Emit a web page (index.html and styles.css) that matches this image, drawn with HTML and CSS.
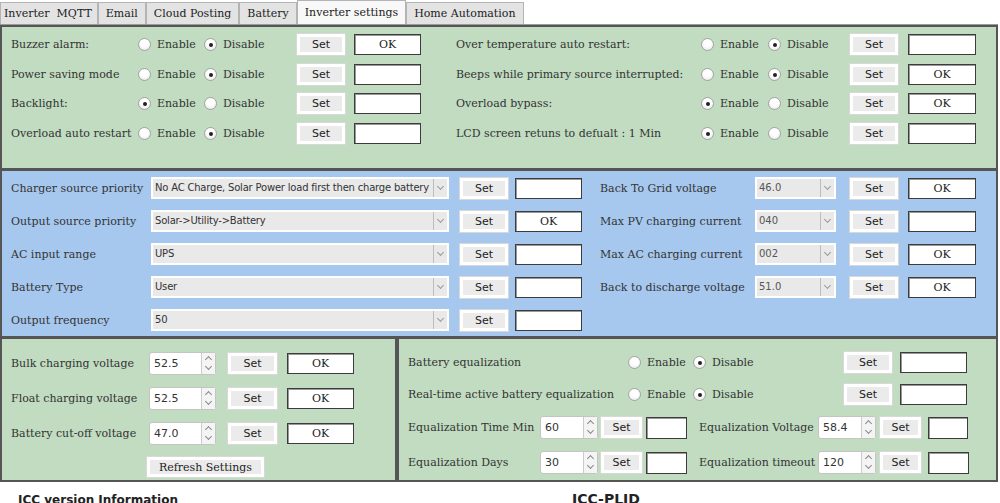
FILE: index.html
```html
<!DOCTYPE html>
<html lang="en">
<head>
    <meta charset="UTF-8">
    <title>Inverter settings</title>
    <link rel="stylesheet" href="styles.css">
</head>
<body>

    <div class="tabs">
        <div class="tab first">Inverter&nbsp; MQTT</div>
        <div class="tab">Email</div>
        <div class="tab">Cloud Posting</div>
        <div class="tab">Battery</div>
        <div class="tab active">Inverter settings</div>
        <div class="tab">Home Automation</div>
    </div>

    <!-- switches -->
    <section class="panel green panel-top">
        <div class="grid top-left">
            <span class="lbl">Buzzer alarm:</span>
            <label class="opt"><span class="radio"></span>Enable</label>
            <label class="opt"><span class="radio on"></span>Disable</label>
            <button class="set">Set</button>
            <div class="status">OK</div>

            <span class="lbl">Power saving mode</span>
            <label class="opt"><span class="radio"></span>Enable</label>
            <label class="opt"><span class="radio on"></span>Disable</label>
            <button class="set">Set</button>
            <div class="status"></div>

            <span class="lbl">Backlight:</span>
            <label class="opt"><span class="radio on"></span>Enable</label>
            <label class="opt"><span class="radio"></span>Disable</label>
            <button class="set">Set</button>
            <div class="status"></div>

            <span class="lbl">Overload auto restart</span>
            <label class="opt"><span class="radio"></span>Enable</label>
            <label class="opt"><span class="radio on"></span>Disable</label>
            <button class="set">Set</button>
            <div class="status"></div>
        </div>
        <div class="grid top-right">
            <span class="lbl">Over temperature auto restart:</span>
            <label class="opt"><span class="radio"></span>Enable</label>
            <label class="opt"><span class="radio on"></span>Disable</label>
            <button class="set">Set</button>
            <div class="status"></div>

            <span class="lbl">Beeps while primary source interrupted:</span>
            <label class="opt"><span class="radio"></span>Enable</label>
            <label class="opt"><span class="radio on"></span>Disable</label>
            <button class="set">Set</button>
            <div class="status">OK</div>

            <span class="lbl">Overload bypass:</span>
            <label class="opt"><span class="radio on"></span>Enable</label>
            <label class="opt"><span class="radio"></span>Disable</label>
            <button class="set">Set</button>
            <div class="status">OK</div>

            <span class="lbl">LCD screen retuns to defualt : 1 Min</span>
            <label class="opt"><span class="radio on"></span>Enable</label>
            <label class="opt"><span class="radio"></span>Disable</label>
            <button class="set">Set</button>
            <div class="status"></div>
        </div>
    </section>

    <!-- priorities -->
    <section class="panel blue panel-mid">
        <div class="grid mid-left">
            <span class="lbl">Charger source priority</span>
            <div class="combo wide"><span class="combo-text">No AC Charge, Solar Power load first then charge battery</span><span class="combo-arrow"></span></div>
            <button class="set">Set</button>
            <div class="status"></div>

            <span class="lbl">Output source priority</span>
            <div class="combo wide"><span class="combo-text">Solar-&gt;Utility-&gt;Battery</span><span class="combo-arrow"></span></div>
            <button class="set">Set</button>
            <div class="status">OK</div>

            <span class="lbl">AC input range</span>
            <div class="combo wide"><span class="combo-text">UPS</span><span class="combo-arrow"></span></div>
            <button class="set">Set</button>
            <div class="status"></div>

            <span class="lbl">Battery Type</span>
            <div class="combo wide"><span class="combo-text">User</span><span class="combo-arrow"></span></div>
            <button class="set">Set</button>
            <div class="status"></div>

            <span class="lbl">Output frequency</span>
            <div class="combo wide"><span class="combo-text">50</span><span class="combo-arrow"></span></div>
            <button class="set">Set</button>
            <div class="status"></div>
        </div>
        <div class="grid mid-right">
            <span class="lbl">Back To Grid voltage</span>
            <div class="combo small"><span class="combo-text">46.0</span><span class="combo-arrow"></span></div>
            <button class="set">Set</button>
            <div class="status">OK</div>

            <span class="lbl">Max PV charging current</span>
            <div class="combo small"><span class="combo-text">040</span><span class="combo-arrow"></span></div>
            <button class="set">Set</button>
            <div class="status"></div>

            <span class="lbl">Max AC charging current</span>
            <div class="combo small"><span class="combo-text">002</span><span class="combo-arrow"></span></div>
            <button class="set">Set</button>
            <div class="status">OK</div>

            <span class="lbl">Back to discharge voltage</span>
            <div class="combo small"><span class="combo-text">51.0</span><span class="combo-arrow"></span></div>
            <button class="set">Set</button>
            <div class="status">OK</div>
        </div>
    </section>

    <div class="bottom">
        <!-- charging voltages -->
        <section class="panel green panel-volt">
            <div class="grid volt-grid">
                <span class="lbl">Bulk charging voltage</span>
                <div class="spin"><span class="spin-text">52.5</span><span class="spin-btns"></span></div>
                <button class="set">Set</button>
                <div class="status">OK</div>

                <span class="lbl">Float charging voltage</span>
                <div class="spin"><span class="spin-text">52.5</span><span class="spin-btns"></span></div>
                <button class="set">Set</button>
                <div class="status">OK</div>

                <span class="lbl">Battery cut-off voltage</span>
                <div class="spin"><span class="spin-text">47.0</span><span class="spin-btns"></span></div>
                <button class="set">Set</button>
                <div class="status">OK</div>
            </div>
            <button class="set refresh">Refresh Settings</button>
        </section>

        <!-- equalization -->
        <section class="panel green panel-eq">
            <div class="grid eq-top">
                <span class="lbl">Battery equalization</span>
                <label class="opt"><span class="radio"></span>Enable</label>
                <label class="opt"><span class="radio on"></span>Disable</label>
                <button class="set">Set</button>
                <div class="status"></div>

                <span class="lbl">Real-time active battery equalization</span>
                <label class="opt"><span class="radio"></span>Enable</label>
                <label class="opt"><span class="radio on"></span>Disable</label>
                <button class="set">Set</button>
                <div class="status"></div>
            </div>
            <div class="grid eq-bottom">
                <span class="lbl">Equalization Time Min</span>
                <div class="spin"><span class="spin-text">60</span><span class="spin-btns"></span></div>
                <button class="set">Set</button>
                <div class="status"></div>
                <span class="lbl">Equalization Voltage</span>
                <div class="spin"><span class="spin-text">58.4</span><span class="spin-btns"></span></div>
                <button class="set">Set</button>
                <div class="status"></div>

                <span class="lbl">Equalization Days</span>
                <div class="spin"><span class="spin-text">30</span><span class="spin-btns"></span></div>
                <button class="set">Set</button>
                <div class="status"></div>
                <span class="lbl">Equalization timeout</span>
                <div class="spin"><span class="spin-text">120</span><span class="spin-btns"></span></div>
                <button class="set">Set</button>
                <div class="status"></div>
            </div>
        </section>
    </div>

    <footer class="info">
        <span class="info-title">ICC version Information</span>
        <span class="info-plid">ICC-PLID</span>
    </footer>

</body>
</html>
```

FILE: styles.css
```css
body {
    margin: 0;
    font-family: "DejaVu Serif", serif;
    font-size: 11px;
    color: #333;
    background-color: #fff;
    width: 998px;
}
.tabs {
    display: flex;
    height: 25px;
    border-bottom: 1px solid #9a9a9a;
    box-sizing: border-box;
}
.tab {
    padding: 0 7px;
    margin-top: 2px;
    line-height: 22px;
    border: 1px solid #b4b4b4;
    border-bottom: none;
    background-color: #e3e3e3;
    color: #222;
    white-space: nowrap;
}
.tab.first {
    padding: 0 5px 0 3px;
}
.tab.active {
    margin-top: 0;
    line-height: 24px;
    background-color: #f8f8f8;
    padding: 0 7px;
}
.panel {
    border: 2px solid #555;
    box-sizing: border-box;
}
.green {
    background-color: #c1dcc1;
}
.blue {
    background-color: #a7c8ee;
}
.grid {
    display: grid;
    align-items: center;
    align-content: start;
}
.lbl {
    white-space: nowrap;
}
/* --- radios --- */
.opt {
    display: flex;
    align-items: center;
    gap: 6px;
    white-space: nowrap;
}
.radio {
    width: 11px;
    height: 11px;
    border-radius: 50%;
    border: 1px solid #a3a3a3;
    background: radial-gradient(circle at 50% 35%, #fff 40%, #e2e2e2 100%);
    position: relative;
    flex: none;
}
.radio.on::after {
    content: "";
    position: absolute;
    left: 4px;
    top: 4px;
    width: 4px;
    height: 4px;
    border-radius: 50%;
    background-color: #222;
}
/* --- buttons and status boxes --- */
.set {
    height: 21px;
    width: 48px;
    padding: 0;
    border: 3px solid #fff;
    background-color: #ebebeb;
    box-shadow: 0 0 0 1px #d8d8d8;
    font-family: "DejaVu Sans", sans-serif;
    font-size: 11px;
    color: #222;
    box-sizing: border-box;
}
.status {
    height: 21px;
    width: 67px;
    border: 1px solid #3c3c3c;
    box-shadow: inset 1px 1px 0 #999;
    background-color: #fff;
    box-sizing: border-box;
    text-align: center;
    line-height: 19px;
    color: #222;
}
/* --- top panel --- */
.panel-top {
    display: flex;
    height: 145px;
}
.top-left {
    margin-left: 9px;
    padding-top: 7px;
    grid-template-columns: 127px 66px 93px 57px 67px;
    row-gap: 8.5px;
}
.top-right {
    margin-left: 35px;
    padding-top: 7px;
    grid-template-columns: 245px 67px 82px 58px 68px;
    row-gap: 8.5px;
}
.top-right .status {
    width: 68px;
}
/* --- middle panel --- */
.panel-mid {
    display: flex;
    height: 169px;
    margin-top: -1px;
}
.mid-left {
    margin-left: 9px;
    padding-top: 6px;
    grid-template-columns: 140px 309px 55px 67px;
    row-gap: 11px;
}
.mid-right {
    margin-left: 18px;
    padding-top: 6px;
    grid-template-columns: 155px 95px 58px 68px;
    row-gap: 11px;
}
.mid-right .status {
    width: 68px;
}
.combo {
    display: flex;
    height: 22px;
    border: 2px solid #fff;
    background-color: #e9e9e9;
    box-sizing: border-box;
    font-family: "DejaVu Sans", sans-serif;
    font-size: 10px;
    letter-spacing: -0.2px;
    color: #333;
}
.combo.wide {
    width: 298px;
}
.combo.small {
    width: 81px;
}
.combo.small .combo-text {
    color: #555;
    letter-spacing: 0;
}
.combo-text {
    flex: 1;
    padding-left: 2px;
    line-height: 18px;
    overflow: hidden;
    white-space: nowrap;
}
.combo-arrow {
    width: 13px;
    border-left: 1px solid #bdbdbd;
    position: relative;
}
.combo-arrow::after {
    content: "";
    position: absolute;
    left: 4px;
    top: 5px;
    width: 4px;
    height: 4px;
    border-right: 1px solid #9a9a9a;
    border-bottom: 1px solid #9a9a9a;
    transform: rotate(45deg);
}
/* --- bottom panels --- */
.bottom {
    display: flex;
    height: 145px;
    margin-top: -1px;
}
.panel-volt {
    width: 397px;
}
.panel-eq {
    width: 601px;
}
.volt-grid {
    margin-left: 9px;
    padding-top: 13px;
    grid-template-columns: 138px 79px 59px 67px;
    row-gap: 12px;
}
.volt-grid .set {
    width: 49px;
}
.spin {
    display: flex;
    height: 23px;
    width: 67px;
    border: 1px solid #c4c4c4;
    border-radius: 3px;
    background-color: #fff;
    box-sizing: border-box;
    font-family: "DejaVu Sans", sans-serif;
    font-size: 11px;
    color: #333;
}
.spin-text {
    flex: 1;
    padding-left: 4px;
    line-height: 21px;
}
.spin-btns {
    width: 13px;
    border-left: 1px solid #ccc;
    background-color: #f4f4f4;
    position: relative;
}
.spin-btns::before,
.spin-btns::after {
    content: "";
    position: absolute;
    left: 4px;
    width: 4px;
    height: 4px;
    border-left: 1px solid #888;
    border-top: 1px solid #888;
}
.spin-btns::before {
    top: 4px;
    transform: rotate(45deg);
}
.spin-btns::after {
    top: 11px;
    transform: rotate(225deg);
}
.refresh {
    display: block;
    width: 117px;
    height: 20px;
    margin: 12px 0 0 145px;
    font-family: "DejaVu Serif", serif;
}
.eq-top {
    margin-left: 9px;
    padding-top: 13px;
    grid-template-columns: 220px 65px 151px 56px 68px;
    row-gap: 11px;
}
.eq-bottom {
    margin-left: 9px;
    margin-top: 11px;
    grid-template-columns: 132px 61px 45px 53px 119px 62px 48px 40px;
    row-gap: 12px;
}
.eq-bottom .spin {
    width: 58px;
}
.eq-bottom .spin:nth-of-type(2) {
    width: 52px;
}
.eq-bottom .set {
    width: 41px;
}
.eq-bottom .status {
    width: 41px;
    height: 22px;
}
.eq-bottom .status:nth-of-type(4) {
    width: 40px;
}
/* --- footer --- */
.info {
    display: flex;
    align-items: flex-end;
    height: 25px;
    padding-left: 18px;
    font-family: "DejaVu Sans", sans-serif;
    font-weight: bold;
    color: #222;
}
.info-title {
    width: 554px;
    font-size: 12px;
}
.info-plid {
    font-size: 14px;
}
```
